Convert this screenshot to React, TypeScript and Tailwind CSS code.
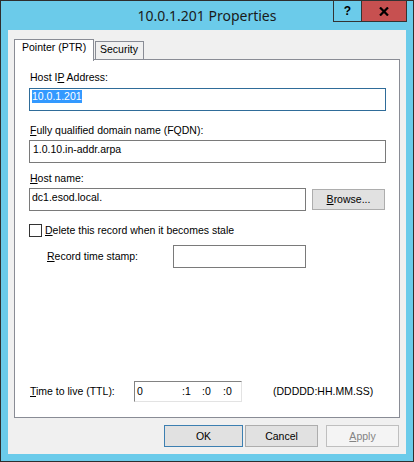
import React from 'react';

const U: React.FC<{ children: React.ReactNode }> = ({ children }) => (
  <span className="underline underline-offset-[1px] decoration-[1px]">{children}</span>
);

const Btn: React.FC<{ w: string; children: React.ReactNode; primary?: boolean; disabled?: boolean; extra?: string }> = ({
  w,
  children,
  primary,
  disabled,
  extra = '',
}) => (
  <button
    className={`${w} h-[22px] border flex items-center justify-center ${extra} ${
      disabled
        ? 'bg-[#f4f4f4] border-[#bfbfbf] text-[#838383]'
        : primary
        ? 'bg-[#e1e1e1] border-[#3c7fb1] text-black'
        : 'bg-[#e1e1e1] border-[#adadad] text-black'
    }`}
  >
    {children}
  </button>
);

export default function App() {
  return (
    <div className="w-[414px] h-[462px] bg-[#6bcbea] border border-[#2e2e2e] flex flex-col relative font-['Liberation_Sans',Arial,sans-serif] text-[10.5px] leading-[13px] text-black">
      {/* Title bar */}
      <div className="h-[29px] flex items-center justify-center font-['Noto_Sans',sans-serif] text-[14px] text-[#1a1a1a]">
        10.0.1.201 Properties
      </div>

      {/* Caption buttons */}
      <div className="absolute top-[-1px] left-[332px] flex">
        <div className="w-[29px] h-[22px] border border-[#333] flex items-center justify-center font-bold text-[12px] leading-none">
          ?
        </div>
        <div className="w-[46px] h-[22px] -ml-px border border-[#333] bg-[#c75050] flex items-center justify-center">
          <svg width="10" height="9" viewBox="0 0 10 9">
            <path d="M1 0.5 L9 8.5 M9 0.5 L1 8.5" stroke="#000" strokeWidth="2.2" fill="none" />
          </svg>
        </div>
      </div>

      {/* Client area */}
      <div className="mx-[7px] h-[424px] bg-[#f0f0f0] flex flex-col px-[6px]">
        {/* Tabs */}
        <div className="mt-[9px] h-[20px] flex items-end">
          <div className="relative z-10 w-[80px] h-[22px] -mb-[2px] bg-white border-t border-l border-r border-[#898c95] pl-[7px] pt-px">
            Pointer (PTR)
          </div>
          <div className="ml-px w-[49px] h-[18px] border-t border-l border-r border-[#898c95] pl-[4px] pt-px">
            Security
          </div>
        </div>

        {/* Panel */}
        <div className="h-[359px] bg-white border border-[#898c95] flex flex-col pl-[14px] pr-[13px]">
          <div className="mt-[11px] ml-px">
            Host I<U>P</U> Address:
          </div>
          <div className="mt-[4px] h-[23px] border border-[#2f6c99] pl-[2px] pt-[1px]">
            <span className="bg-[#3399ff] text-white inline-block">10.0.1.201</span>
          </div>

          <div className="mt-[13px] ml-px">
            <U>F</U>ully qualified domain name (FQDN):
          </div>
          <div className="mt-[3px] h-[23px] border border-[#7a7a7a] pl-[3px] pt-[2px]">1.0.10.in-addr.arpa</div>

          <div className="mt-[9px] ml-px">
            <U>H</U>ost name:
          </div>
          <div className="mt-[3px] flex items-center">
            <div className="w-[277px] h-[23px] border border-[#7a7a7a] pl-[2px] pt-[2px]">dc1.esod.local.</div>
            <Btn w="w-[73px]" extra="ml-[6px] !h-[21px]">
              <span>
                <U>B</U>rowse...
              </span>
            </Btn>
          </div>

          <div className="mt-[13px] h-[13px] flex items-center">
            <div className="w-[13px] h-[13px] border border-[#333] bg-white" />
            <div className="ml-[3px]">
              <U>D</U>elete this record when it becomes stale
            </div>
          </div>

          <div className="mt-[8px] flex items-center">
            <div className="ml-[18px] w-[126px]">
              <U>R</U>ecord time stamp:
            </div>
            <div className="w-[133px] h-[23px] border border-[#7a7a7a]" />
          </div>

          <div className="mt-[113px] flex items-center">
            <div className="ml-px w-[104px]">
              <U>T</U>ime to live (TTL):
            </div>
            <div className="w-[108px] h-[21px] border border-t-[#828282] border-l-[#828282] border-r-[#e3e3e3] border-b-[#e3e3e3] bg-white flex items-center pl-[2px]">
              <span className="w-[45px]">0</span>
              <span className="w-[20px]">:1</span>
              <span className="w-[21px]">:0</span>
              <span>:0</span>
            </div>
            <div className="ml-[31px]">(DDDDD:HH.MM.SS)</div>
          </div>
        </div>

        {/* Dialog buttons */}
        <div className="mt-[7px] flex justify-end">
          <Btn w="w-[79px]" primary extra="mr-[2px]">
            OK
          </Btn>
          <Btn w="w-[73px]" extra="mr-[8px]">
            Cancel
          </Btn>
          <Btn w="w-[73px]" disabled extra="mr-px">
            <span>
              <U>A</U>pply
            </span>
          </Btn>
        </div>
      </div>
    </div>
  );
}
